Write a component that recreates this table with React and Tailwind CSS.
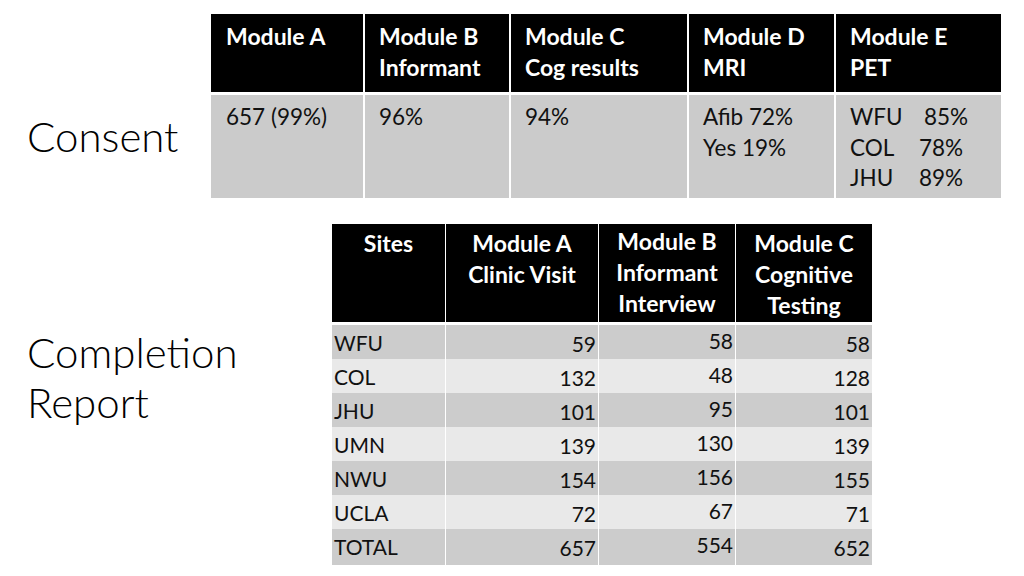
import React from "react";

const topHeaders = [
  ["Module A"],
  ["Module B", "Informant"],
  ["Module C", "Cog results"],
  ["Module D", "MRI"],
  ["Module E", "PET"],
];

const rows = [
  ["WFU", "59", "58", "58"],
  ["COL", "132", "48", "128"],
  ["JHU", "101", "95", "101"],
  ["UMN", "139", "130", "139"],
  ["NWU", "154", "156", "155"],
  ["UCLA", "72", "67", "71"],
  ["TOTAL", "657", "554", "652"],
];

export default function App() {
  return (
    <div className="w-[1024px] h-[576px] bg-white overflow-hidden font-['Lato',sans-serif] text-black">
      {/* Top section */}
      <div className="flex pt-[14px]">
        <div className="w-[211px] pl-[27px] pt-[97px]">
          <div className="text-[42px] leading-[50px] font-light">Consent</div>
        </div>
        <div className="grid grid-cols-[152px_144px_176px_145px_165px] grid-rows-[78px_103px] gap-x-[2px] gap-y-[3px]">
          {topHeaders.map((h, i) => (
            <div
              key={i}
              className={`bg-black text-white font-bold text-[23px] leading-[31px] pt-[7px] ${i === 0 ? "pl-[15px]" : "pl-[14px]"}`}
            >
              {h.map((l) => (
                <div key={l}>{l}</div>
              ))}
            </div>
          ))}
          <div className="bg-[#cbcbcb] text-[22.5px] leading-[30.5px] pt-[7px] pl-[15px] text-[#111]">657 (99%)</div>
          <div className="bg-[#cbcbcb] text-[22.5px] leading-[30.5px] pt-[7px] pl-[14px] text-[#111]">96%</div>
          <div className="bg-[#cbcbcb] text-[22.5px] leading-[30.5px] pt-[7px] pl-[14px] text-[#111]">94%</div>
          <div className="bg-[#cbcbcb] text-[22.5px] leading-[30.5px] pt-[7px] pl-[14px] text-[#111]">
            <div>Afib 72%</div>
            <div>Yes 19%</div>
          </div>
          <div className="bg-[#cbcbcb] text-[22.5px] leading-[30.5px] pt-[7px] pl-[14px] text-[#111]">
            <div className="flex">
              <span className="w-[74px]">WFU</span>
              <span>85%</span>
            </div>
            <div className="flex">
              <span className="w-[69px]">COL</span>
              <span>78%</span>
            </div>
            <div className="flex">
              <span className="w-[69px]">JHU</span>
              <span>89%</span>
            </div>
          </div>
        </div>
      </div>

      {/* Bottom section */}
      <div className="flex pt-[26px]">
        <div className="w-[332px] pl-[27px] pt-[103px]">
          <div className="text-[42px] leading-[50px] font-light">
            <div>Completion</div>
            <div>Report</div>
          </div>
        </div>
        <div className="flex flex-col gap-y-[3px] w-[540px]">
          <div className="grid grid-cols-[113px_152px_136px_136px] gap-x-[1px] h-[98px]">
            <div className="bg-black text-white font-bold text-[23px] leading-[31px] pt-[4px] text-center">Sites</div>
            <div className="bg-black text-white font-bold text-[23px] leading-[31px] pt-[4px] text-center">
              <div>Module A</div>
              <div>Clinic Visit</div>
            </div>
            <div className="bg-black text-white font-bold text-[23px] leading-[31px] pt-[2px] text-center">
              <div>Module B</div>
              <div>Informant</div>
              <div>Interview</div>
            </div>
            <div className="bg-black text-white font-bold text-[23px] leading-[31px] pt-[4px] text-center">
              <div>Module C</div>
              <div>Cognitive</div>
              <div>Testing</div>
            </div>
          </div>
          <div className="flex flex-col gap-y-[2px]">
            {rows.map((r, i) => {
              const bg = i % 2 === 0 ? "bg-[#cccccc]" : "bg-[#e9e9e9]";
              return (
                <div key={r[0]} className="grid grid-cols-[113px_152px_136px_136px] gap-x-[1px] h-[32px] text-[21px] text-[#111]">
                  <div className={`${bg} flex items-center pl-[2px]`}>{r[0]}</div>
                  <div className={`${bg} flex items-center justify-end pr-[2px] pt-[2px]`}>{r[1]}</div>
                  <div className={`${bg} flex items-center justify-end pr-[2px] pb-[4px]`}>{r[2]}</div>
                  <div className={`${bg} flex items-center justify-end pr-[2px] pt-[2px]`}>{r[3]}</div>
                </div>
              );
            })}
          </div>
        </div>
      </div>
    </div>
  );
}
